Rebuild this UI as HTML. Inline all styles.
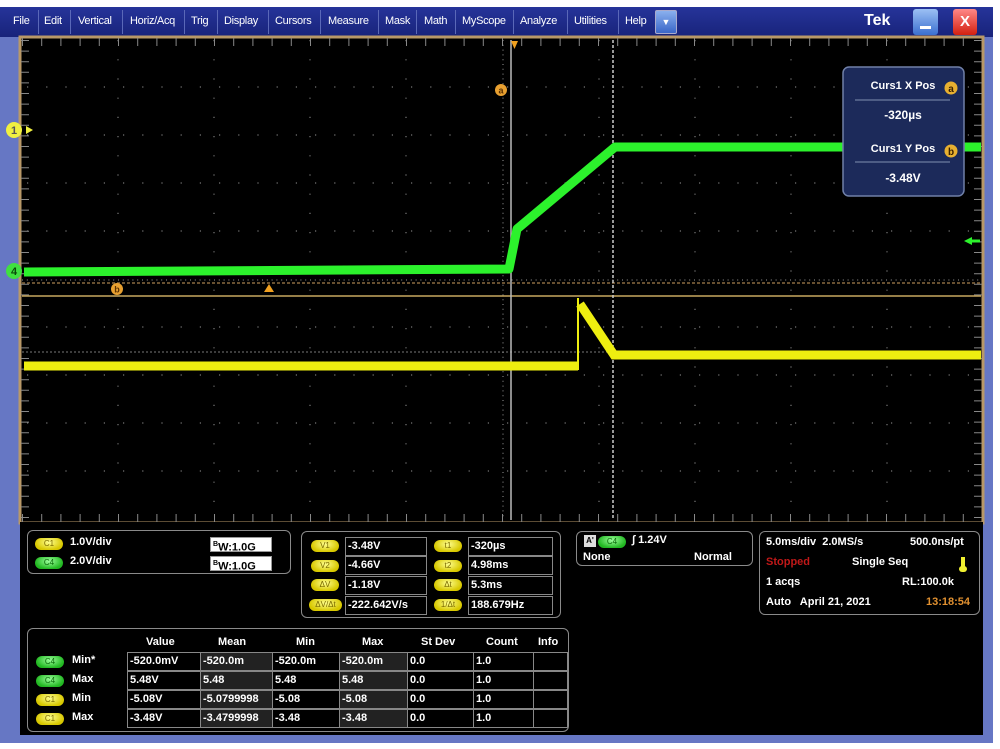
<!DOCTYPE html>
<html><head><meta charset="utf-8"><style>
*{margin:0;padding:0;box-sizing:border-box}
body{width:1000px;height:749px;background:#fff;position:relative;overflow:hidden;font-family:"Liberation Sans",Arial,sans-serif;font-weight:bold}
.a{position:absolute}
#menu{left:0;top:7px;width:993px;height:30px;background:linear-gradient(#26349a,#18237a);}
.mi{position:absolute;top:8px;color:#fff;font-size:11px;font-weight:normal;letter-spacing:-0.3px}
.sep{position:absolute;top:3px;width:1px;height:24px;background:#5a68b8}
#frame{left:0;top:37px;width:993px;height:706px;background:#6677c4}
#bottom{left:20px;top:522px;width:963px;height:213px;background:#000}
.box{position:absolute;border:1.5px solid #8a8a8a;border-radius:6px}
.t{position:absolute;color:#fff;font-size:11px;white-space:nowrap}
.pill{position:absolute;width:28px;height:12px;border-radius:6px;font-size:8px;text-align:center;line-height:12px;font-weight:normal}
.y{background:radial-gradient(ellipse at 50% 35%,#ffff90,#d8c800 70%);color:#7a6a00}
.g{background:radial-gradient(ellipse at 50% 35%,#9cff9c,#22b822 70%);color:#0a6a0a}
.cell{position:absolute;border:1px solid #888;color:#fff;font-size:11px;padding-left:2px;line-height:17px;height:19px}
.bw{position:absolute;background:#fff;color:#000;font-size:11px;width:62px;height:15px;border:1px solid #999;line-height:14px;padding-left:2px}
</style></head><body>
<div class="a" id="frame"></div>
<div class="a" id="menu">
<span class="mi" style="left:13px">File</span><div class="sep" style="left:38px"></div>
<span class="mi" style="left:44px">Edit</span><div class="sep" style="left:70px"></div>
<span class="mi" style="left:78px">Vertical</span><div class="sep" style="left:122px"></div>
<span class="mi" style="left:130px">Horiz/Acq</span><div class="sep" style="left:184px"></div>
<span class="mi" style="left:191px">Trig</span><div class="sep" style="left:217px"></div>
<span class="mi" style="left:224px">Display</span><div class="sep" style="left:268px"></div>
<span class="mi" style="left:275px">Cursors</span><div class="sep" style="left:320px"></div>
<span class="mi" style="left:328px">Measure</span><div class="sep" style="left:378px"></div>
<span class="mi" style="left:385px">Mask</span><div class="sep" style="left:416px"></div>
<span class="mi" style="left:424px">Math</span><div class="sep" style="left:455px"></div>
<span class="mi" style="left:462px">MyScope</span><div class="sep" style="left:513px"></div>
<span class="mi" style="left:520px">Analyze</span><div class="sep" style="left:567px"></div>
<span class="mi" style="left:574px">Utilities</span><div class="sep" style="left:618px"></div>
<span class="mi" style="left:625px">Help</span>
<div class="a" style="left:655px;top:3px;width:22px;height:24px;background:linear-gradient(#8ab0ee,#3a66c8);border:1px solid #aac;border-radius:2px;color:#fff;font-size:9px;text-align:center;line-height:22px">▼</div>
<span class="a" style="left:864px;top:5px;color:#fff;font-size:16px;font-weight:bold">Tek</span>
<div class="a" style="left:913px;top:2px;width:25px;height:26px;background:linear-gradient(#9cc0f4,#3b6fd0);border-radius:3px"><div class="a" style="left:7px;top:17px;width:11px;height:3px;background:#fff"></div></div>
<div class="a" style="left:953px;top:2px;width:24px;height:26px;background:linear-gradient(#f88,#d32010);border-radius:3px;color:#fff;font-size:15px;text-align:center;line-height:26px">X</div>
</div>
<svg class="a" style="left:0;top:0" width="1000" height="749">
<rect x="20" y="37" width="963" height="486" fill="#000" stroke="#b89868" stroke-width="3"/>
<g stroke="#777" stroke-width="1.2" stroke-dasharray="1.2 18">
<line x1="118" y1="40" x2="118" y2="520"/><line x1="214" y1="40" x2="214" y2="520"/><line x1="310" y1="40" x2="310" y2="520"/><line x1="406" y1="40" x2="406" y2="520"/><line x1="599" y1="40" x2="599" y2="520"/><line x1="695" y1="40" x2="695" y2="520"/><line x1="791" y1="40" x2="791" y2="520"/><line x1="887" y1="40" x2="887" y2="520"/>
</g>
<g stroke="#777" stroke-width="1.2" stroke-dasharray="1.2 18" stroke-dashoffset="-5">
<line x1="22" y1="87" x2="981" y2="87"/><line x1="22" y1="135" x2="981" y2="135"/><line x1="22" y1="183" x2="981" y2="183"/><line x1="22" y1="231" x2="981" y2="231"/><line x1="22" y1="327" x2="981" y2="327"/><line x1="22" y1="375" x2="981" y2="375"/><line x1="22" y1="423" x2="981" y2="423"/><line x1="22" y1="471" x2="981" y2="471"/>
</g>
<g stroke="#999" stroke-width="1" stroke-dasharray="1 3.8">
<line x1="503" y1="40" x2="503" y2="520"/><line x1="22" y1="280" x2="981" y2="280"/>
</g>
<line x1="22" y1="42" x2="981" y2="42" stroke-width="8" stroke="#888" stroke-dasharray="1 18.2"/>
<line x1="22" y1="518" x2="981" y2="518" stroke-width="8" stroke="#888" stroke-dasharray="1 18.2"/>
<g stroke="#888" stroke-dasharray="1 9.6"><line x1="25" y1="40" x2="25" y2="520" stroke-width="8"/><line x1="978" y1="40" x2="978" y2="520" stroke-width="8"/></g>
<line x1="22" y1="283" x2="981" y2="283" stroke="#8a6a40" stroke-width="1.5" stroke-dasharray="3 2"/>
<line x1="22" y1="352" x2="981" y2="352" stroke="#777" stroke-width="1" stroke-dasharray="2 2"/>
<line x1="22" y1="296" x2="981" y2="296" stroke="#c8a860" stroke-width="1.5"/>
<line x1="511" y1="40" x2="511" y2="520" stroke="#bbb" stroke-width="1.5"/>
<line x1="613" y1="40" x2="613" y2="520" stroke="#ccc" stroke-width="1.5" stroke-dasharray="3 2"/>
<polyline points="24,272 509,269 517,229 615,147 981,147" fill="none" stroke="#2cf22c" stroke-width="9" stroke-linejoin="round"/>
<polyline points="24,366 578,366" fill="none" stroke="#eeee10" stroke-width="9"/>
<polyline points="580,304 614,355 981,355" fill="none" stroke="#eeee10" stroke-width="9"/>
<line x1="578" y1="298" x2="578" y2="370" stroke="#eeee10" stroke-width="2"/>
<polygon points="511,41 518,41 514.5,49" fill="#f0a020"/>
<polygon points="264,292 274,292 269,284" fill="#f0a020"/>
<circle cx="501" cy="90" r="6" fill="#e8a030"/><text x="501" y="93.5" font-size="9" text-anchor="middle" fill="#5a3000" font-family="Liberation Sans">a</text>
<circle cx="117" cy="289" r="6" fill="#e8a030"/><text x="117" y="292.5" font-size="9" text-anchor="middle" fill="#5a3000" font-family="Liberation Sans">b</text>
<circle cx="14" cy="130" r="8" fill="#f0f040"/><text x="14" y="134" font-size="11" text-anchor="middle" fill="#555" font-family="Liberation Sans" font-weight="bold">1</text>
<polygon points="26,126 33,130 26,134" fill="#f0f040"/>
<circle cx="14" cy="271" r="8" fill="#40e040"/><text x="14" y="275" font-size="11" text-anchor="middle" fill="#0a4a0a" font-family="Liberation Sans" font-weight="bold">4</text>
<polygon points="964,241 972,237 972,245" fill="#2cf22c"/><line x1="970" y1="241" x2="980" y2="241" stroke="#2cf22c" stroke-width="3"/>
<rect x="843" y="67" width="121" height="129" rx="6" fill="#1c2a5a" stroke="#7080a8" stroke-width="1.5"/>
<text x="903" y="89" font-size="11" text-anchor="middle" fill="#fff" font-family="Liberation Sans" font-weight="bold">Curs1 X Pos</text>
<circle cx="951" cy="88" r="6.5" fill="#e8b030"/><text x="951" y="92" font-size="10" text-anchor="middle" fill="#3a2000" font-family="Liberation Sans" font-weight="bold">a</text>
<line x1="855" y1="100" x2="950" y2="100" stroke="#8090b0"/>
<text x="903" y="119" font-size="12" text-anchor="middle" fill="#fff" font-family="Liberation Sans" font-weight="bold">-320µs</text>
<text x="903" y="152" font-size="11" text-anchor="middle" fill="#fff" font-family="Liberation Sans" font-weight="bold">Curs1 Y Pos</text>
<circle cx="951" cy="151" r="6.5" fill="#e8b030"/><text x="951" y="155" font-size="10" text-anchor="middle" fill="#3a2000" font-family="Liberation Sans" font-weight="bold">b</text>
<line x1="855" y1="162" x2="950" y2="162" stroke="#8090b0"/>
<text x="903" y="182" font-size="12" text-anchor="middle" fill="#fff" font-family="Liberation Sans" font-weight="bold">-3.48V</text>
</svg>
<div class="a" id="bottom"></div>
<div class="box" style="left:27px;top:530px;width:264px;height:44px"></div>
<div class="pill y" style="left:35px;top:538px">C1</div><span class="t" style="left:70px;top:536px">1.0V/div</span>
<div class="pill g" style="left:35px;top:557px">C4</div><span class="t" style="left:70px;top:555px">2.0V/div</span>
<div class="bw" style="left:210px;top:537px"><sup style="font-size:7px">B</sup>W:1.0G</div>
<div class="bw" style="left:210px;top:556px"><sup style="font-size:7px">B</sup>W:1.0G</div>
<div class="box" style="left:301px;top:531px;width:260px;height:87px"></div>
<div class="pill y" style="left:311px;top:540px">V1</div><div class="cell" style="left:345px;top:537px;width:82px">-3.48V</div>
<div class="pill y" style="left:311px;top:560px">V2</div><div class="cell" style="left:345px;top:556px;width:82px">-4.66V</div>
<div class="pill y" style="left:311px;top:579px">ΔV</div><div class="cell" style="left:345px;top:576px;width:82px">-1.18V</div>
<div class="pill y" style="left:309px;top:599px;width:33px">ΔV/Δt</div><div class="cell" style="left:345px;top:596px;width:82px">-222.642V/s</div>
<div class="pill y" style="left:434px;top:540px">t1</div><div class="cell" style="left:468px;top:537px;width:85px">-320µs</div>
<div class="pill y" style="left:434px;top:560px">t2</div><div class="cell" style="left:468px;top:556px;width:85px">4.98ms</div>
<div class="pill y" style="left:434px;top:579px">Δt</div><div class="cell" style="left:468px;top:576px;width:85px">5.3ms</div>
<div class="pill y" style="left:434px;top:599px">1/Δt</div><div class="cell" style="left:468px;top:596px;width:85px">188.679Hz</div>
<div class="box" style="left:576px;top:531px;width:177px;height:35px"></div>
<div class="a" style="left:584px;top:535px;width:12px;height:12px;background:#ddd;color:#000;font-size:8px;line-height:12px;text-align:center">A'</div>
<div class="pill g" style="left:598px;top:536px">C4</div>
<span class="t" style="left:632px;top:534px">∫ 1.24V</span>
<span class="t" style="left:583px;top:551px">None</span><span class="t" style="left:694px;top:551px">Normal</span>
<div class="box" style="left:759px;top:531px;width:221px;height:84px"></div>
<span class="t" style="left:766px;top:536px">5.0ms/div&nbsp; 2.0MS/s</span><span class="t" style="left:910px;top:536px">500.0ns/pt</span>
<span class="t" style="left:766px;top:556px;color:#c01818">Stopped</span><span class="t" style="left:852px;top:556px">Single Seq</span>
<div class="a" style="left:961px;top:557px;width:4px;height:12px;background:#f0f030"></div><div class="a" style="left:959px;top:566px;width:8px;height:6px;border-radius:4px;background:#f0f030"></div>
<span class="t" style="left:766px;top:576px">1 acqs</span><span class="t" style="left:902px;top:576px">RL:100.0k</span>
<span class="t" style="left:766px;top:596px">Auto&nbsp;&nbsp; April 21, 2021</span><span class="t" style="left:926px;top:596px;color:#e09030">13:18:54</span>
<div class="box" style="left:27px;top:628px;width:542px;height:104px"></div>
<span class="t" style="left:146px;top:636px">Value</span><span class="t" style="left:218px;top:636px">Mean</span><span class="t" style="left:296px;top:636px">Min</span><span class="t" style="left:362px;top:636px">Max</span><span class="t" style="left:421px;top:636px">St Dev</span><span class="t" style="left:486px;top:636px">Count</span><span class="t" style="left:538px;top:636px">Info</span>
<div class="pill g" style="left:36px;top:656px">C4</div><span class="t" style="left:72px;top:654px">Min*</span>
<div class="pill g" style="left:36px;top:675px">C4</div><span class="t" style="left:72px;top:673px">Max</span>
<div class="pill y" style="left:36px;top:694px">C1</div><span class="t" style="left:72px;top:692px">Min</span>
<div class="pill y" style="left:36px;top:713px">C1</div><span class="t" style="left:72px;top:711px">Max</span>
<div class="a" style="left:127px;top:652px;width:441px;height:76px">
<div class="cell" style="left:0;top:0;width:74px">-520.0mV</div><div class="cell" style="left:73px;top:0;width:73px;background:#222">-520.0m</div><div class="cell" style="left:145px;top:0;width:68px">-520.0m</div><div class="cell" style="left:212px;top:0;width:69px;background:#222">-520.0m</div><div class="cell" style="left:280px;top:0;width:67px">0.0</div><div class="cell" style="left:346px;top:0;width:61px">1.0</div><div class="cell" style="left:406px;top:0;width:35px"></div>
<div class="cell" style="left:0;top:19px;width:74px">5.48V</div><div class="cell" style="left:73px;top:19px;width:73px;background:#222">5.48</div><div class="cell" style="left:145px;top:19px;width:68px">5.48</div><div class="cell" style="left:212px;top:19px;width:69px;background:#222">5.48</div><div class="cell" style="left:280px;top:19px;width:67px">0.0</div><div class="cell" style="left:346px;top:19px;width:61px">1.0</div><div class="cell" style="left:406px;top:19px;width:35px"></div>
<div class="cell" style="left:0;top:38px;width:74px">-5.08V</div><div class="cell" style="left:73px;top:38px;width:73px;background:#222">-5.0799998</div><div class="cell" style="left:145px;top:38px;width:68px">-5.08</div><div class="cell" style="left:212px;top:38px;width:69px;background:#222">-5.08</div><div class="cell" style="left:280px;top:38px;width:67px">0.0</div><div class="cell" style="left:346px;top:38px;width:61px">1.0</div><div class="cell" style="left:406px;top:38px;width:35px"></div>
<div class="cell" style="left:0;top:57px;width:74px">-3.48V</div><div class="cell" style="left:73px;top:57px;width:73px;background:#222">-3.4799998</div><div class="cell" style="left:145px;top:57px;width:68px">-3.48</div><div class="cell" style="left:212px;top:57px;width:69px;background:#222">-3.48</div><div class="cell" style="left:280px;top:57px;width:67px">0.0</div><div class="cell" style="left:346px;top:57px;width:61px">1.0</div><div class="cell" style="left:406px;top:57px;width:35px"></div>
</div>
</body></html>
